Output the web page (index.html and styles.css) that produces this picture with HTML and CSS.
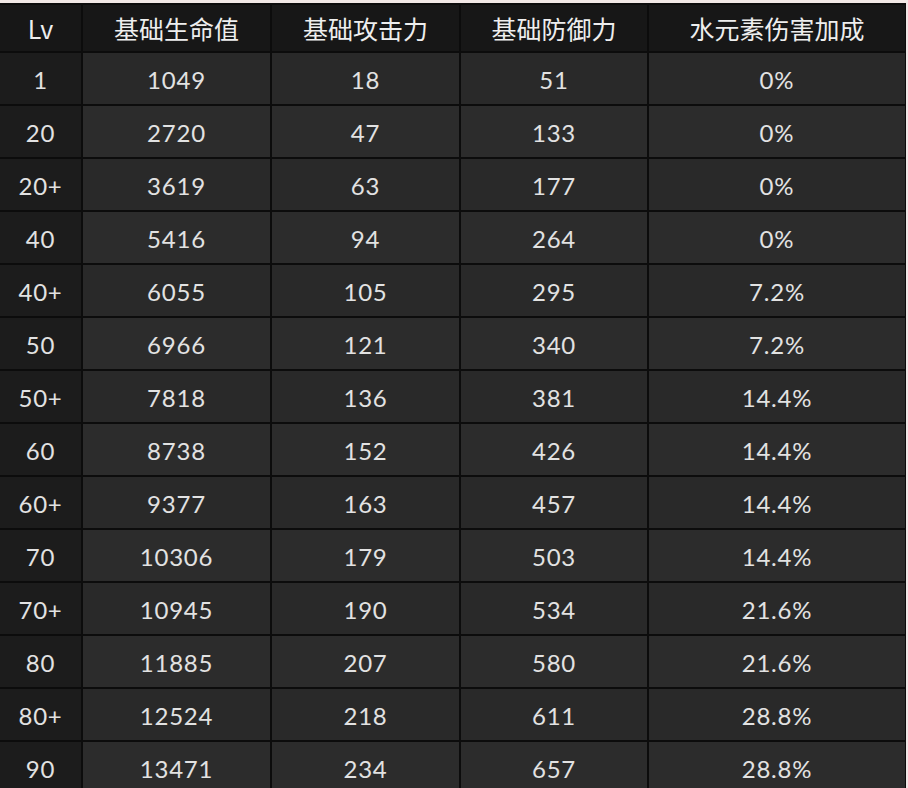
FILE: index.html
```html
<!DOCTYPE html>
<html lang="zh">
<head>
<meta charset="utf-8">
<link rel="stylesheet" href="styles.css">
</head>
<body>
<div class="page">
  <div class="strip"></div>
  <div class="frame">
    <div class="table">
      <div class="cell head lv">Lv</div>
      <div class="cell head">基础生命值</div>
      <div class="cell head">基础攻击力</div>
      <div class="cell head">基础防御力</div>
      <div class="cell head">水元素伤害加成</div>

      <div class="cell lv">1</div><div class="cell">1049</div><div class="cell">18</div><div class="cell">51</div><div class="cell">0%</div>
      <div class="cell lv">20</div><div class="cell alt">2720</div><div class="cell alt">47</div><div class="cell alt">133</div><div class="cell alt">0%</div>
      <div class="cell lv">20+</div><div class="cell">3619</div><div class="cell">63</div><div class="cell">177</div><div class="cell">0%</div>
      <div class="cell lv">40</div><div class="cell alt">5416</div><div class="cell alt">94</div><div class="cell alt">264</div><div class="cell alt">0%</div>
      <div class="cell lv">40+</div><div class="cell">6055</div><div class="cell">105</div><div class="cell">295</div><div class="cell">7.2%</div>
      <div class="cell lv">50</div><div class="cell alt">6966</div><div class="cell alt">121</div><div class="cell alt">340</div><div class="cell alt">7.2%</div>
      <div class="cell lv">50+</div><div class="cell">7818</div><div class="cell">136</div><div class="cell">381</div><div class="cell">14.4%</div>
      <div class="cell lv">60</div><div class="cell alt">8738</div><div class="cell alt">152</div><div class="cell alt">426</div><div class="cell alt">14.4%</div>
      <div class="cell lv">60+</div><div class="cell">9377</div><div class="cell">163</div><div class="cell">457</div><div class="cell">14.4%</div>
      <div class="cell lv">70</div><div class="cell alt">10306</div><div class="cell alt">179</div><div class="cell alt">503</div><div class="cell alt">14.4%</div>
      <div class="cell lv">70+</div><div class="cell">10945</div><div class="cell">190</div><div class="cell">534</div><div class="cell">21.6%</div>
      <div class="cell lv">80</div><div class="cell alt">11885</div><div class="cell alt">207</div><div class="cell alt">580</div><div class="cell alt">21.6%</div>
      <div class="cell lv">80+</div><div class="cell">12524</div><div class="cell">218</div><div class="cell">611</div><div class="cell">28.8%</div>
      <div class="cell lv">90</div><div class="cell alt">13471</div><div class="cell alt">234</div><div class="cell alt">657</div><div class="cell alt">28.8%</div>
    </div>
  </div>
</div>
</body>
</html>
```

FILE: styles.css
```css
html, body {
  margin: 0;
  padding: 0;
  background: #f1e6e6;
}
.page {
  width: 908px;
  height: 788px;
  overflow: hidden;
  background: #f1e6e6;
}
.strip {
  height: 3px;
  background: #f2e8e6;
}
.frame {
  width: 906px;
  background: #0c0c0c;
  padding-top: 2px;
}
.table {
  display: grid;
  grid-template-columns: 81px 187px 187px 186px 256px;
  grid-template-rows: 46px;
  grid-auto-rows: 51px;
  column-gap: 2px;
  row-gap: 2px;
  background: #0c0c0c;
  padding-bottom: 2px;
}
.cell {
  display: flex;
  align-items: center;
  justify-content: center;
  padding-top: 1px;
  background: #292929;
  color: #e2e2e2;
  font-family: Lato, "Noto Sans CJK SC", sans-serif;
  font-size: 24px;
  letter-spacing: 0.8px;
}
.cell.alt {
  background: #2c2c2c;
}
.cell.lv {
  background: #1c1c1c;
}
.cell.head {
  padding-top: 0;
  background: #171717;
  color: #eeeeee;
  font-family: "Noto Sans CJK SC", Lato, sans-serif;
  font-size: 25px;
  letter-spacing: 0;
}
```
